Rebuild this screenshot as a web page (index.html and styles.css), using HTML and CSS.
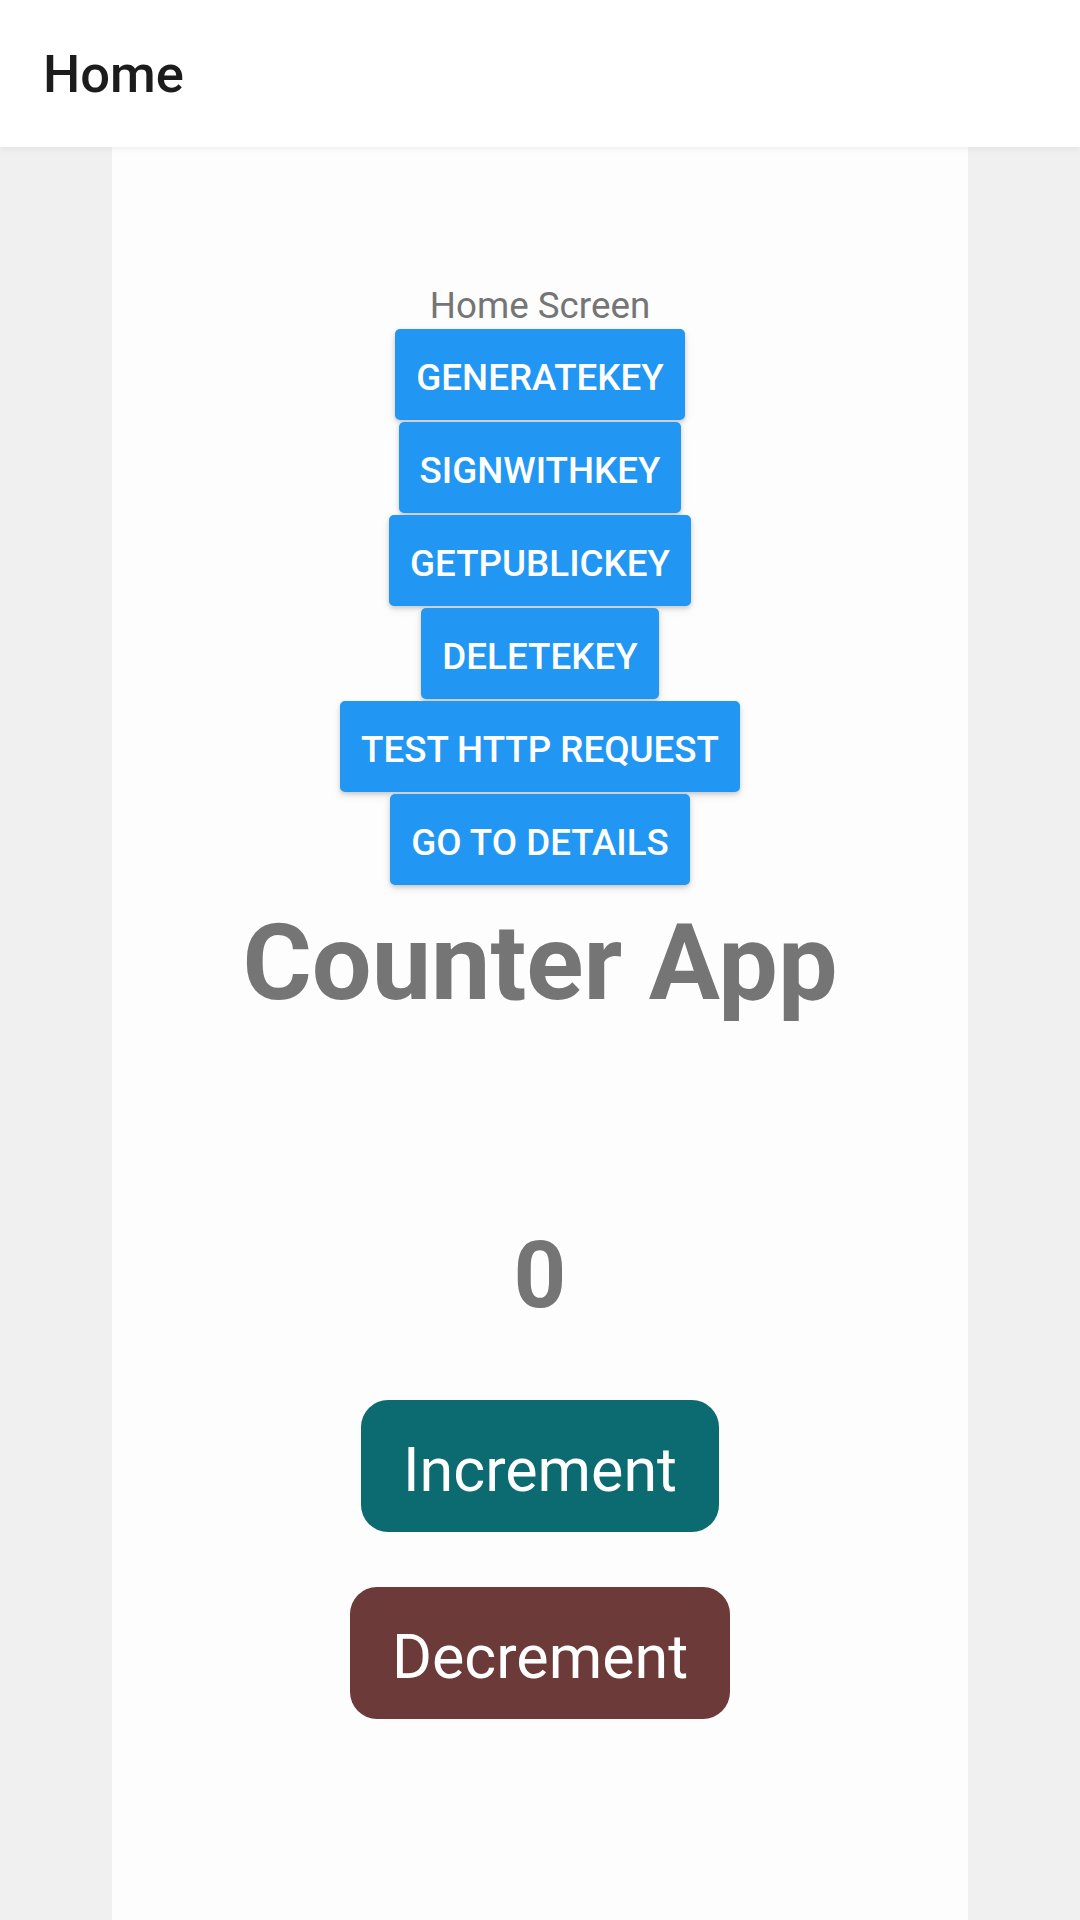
FILE: index.html
```html
<!DOCTYPE html>
<html>
<head>
<meta charset="utf-8">
<link rel="stylesheet" href="styles.css">
</head>
<body>
<header class="appbar"><h1 class="title">Home</h1></header>
<main class="page">
  <section class="column">
    <p class="subtitle">Home Screen</p>
    <div class="actions">
      <button class="btn">GENERATEKEY</button>
      <button class="btn">SIGNWITHKEY</button>
      <button class="btn">GETPUBLICKEY</button>
      <button class="btn">DELETEKEY</button>
      <button class="btn">TEST HTTP REQUEST</button>
      <button class="btn">GO TO DETAILS</button>
    </div>
    <h2 class="heading">Counter App</h2>
    <div class="count">0</div>
    <button class="pill pill-inc">Increment</button>
    <button class="pill pill-dec">Decrement</button>
  </section>
</main>
</body>
</html>
```

FILE: styles.css
```css
* { box-sizing: border-box; }
html, body {
  margin: 0;
  padding: 0;
  height: 1920px;
  overflow: hidden;
}
body {
  background: #f0f0f0;
  font-family: Roboto, "Noto Sans", sans-serif;
  display: flex;
  flex-direction: column;
}
.appbar {
  height: 147px;
  background: #ffffff;
  display: flex;
  align-items: center;
  padding-left: 43px;
  box-shadow: 0 2px 6px rgba(0,0,0,0.06);
  position: relative;
  z-index: 2;
}
.title {
  margin: 0;
  font-size: 52.5px;
  font-weight: 500;
  color: #1c1c1c;
  line-height: 1;
  padding-top: 2px;
}
.page {
  flex: 1;
  display: flex;
  justify-content: center;
  padding-left: 112px;
  padding-right: 112px;
}
.column {
  width: 856px;
  background: #fdfdfd;
  display: flex;
  flex-direction: column;
  align-items: center;
  padding-top: 137px;
}
.subtitle {
  margin: 0;
  font-size: 36.75px;
  line-height: 43px;
  color: #757575;
}
.actions {
  display: flex;
  flex-direction: column;
  align-items: center;
  margin-top: 2px;
}
.btn {
  font-family: Roboto, sans-serif;
  font-size: 36.75px;
  font-weight: 500;
  color: #ffffff;
  background: #2196f3;
  border: none;
  border-radius: 5px;
  height: 91px;
  margin-bottom: 2px;
  padding: 7px 21px 0 21px;
  line-height: 1;
  box-shadow: 0 2px 4px rgba(0,0,0,0.16), 0 4px 10px rgba(0,0,0,0.08);
}
.heading {
  margin: 14px 0 0 0;
  font-size: 106px;
  font-weight: 700;
  color: #757575;
  line-height: 124px;
}
.count {
  margin-top: 197px;
  font-size: 92px;
  font-weight: 700;
  color: #757575;
  line-height: 108px;
}
.pill {
  font-family: Roboto, sans-serif;
  font-size: 61px;
  font-weight: 400;
  color: #ffffff;
  border: none;
  border-radius: 27px;
  height: 132px;
  padding: 9px 42px 0 42px;
  display: flex;
  align-items: center;
  justify-content: center;
  line-height: 1;
}
.pill-inc {
  background: #0b6b71;
  margin-top: 70px;
}
.pill-dec {
  background: #6d3a3a;
  margin-top: 55px;
}
```
